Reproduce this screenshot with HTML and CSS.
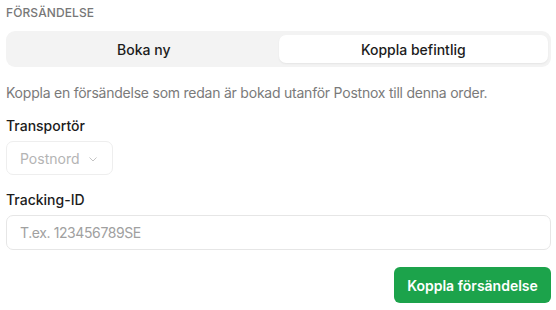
FILE: index.html
```html
<!DOCTYPE html>
<html lang="sv">
<head>
<meta charset="utf-8"/>
<title>Försändelse</title>
<link rel="stylesheet" href="styles.css">
</head>
<body>
<div class="panel">
  <h3 class="section-title">Försändelse</h3>

  <div class="tabs">
    <button type="button" class="tab">Boka ny</button>
    <button type="button" class="tab active">Koppla befintlig</button>
  </div>

  <p class="hint">Koppla en försändelse som redan är bokad utanför Postnox till denna order.</p>

  <label class="field-label">Transportör</label>
  <div class="select disabled">
    <span>Postnord</span>
    <svg width="10" height="10" viewBox="0 0 10 10"><path d="M1.5 3.5 L5 7 L8.5 3.5" fill="none" stroke="#c4c4c4" stroke-width="1"/></svg>
  </div>

  <label class="field-label second">Tracking-ID</label>
  <input type="text" class="text-input" placeholder="T.ex. 123456789SE">

  <div class="actions">
    <button type="button" class="primary">Koppla försändelse</button>
  </div>
</div>
</body>
</html>
```

FILE: styles.css
```css
:root{--green:#1ca34b;--muted:#777;--text:#1c1c1c;--border:#e6e6e6;}
*{margin:0;padding:0;box-sizing:border-box;font-family:Inter,"Noto Sans",sans-serif;}
body{background:#fff;color:var(--text);}
.panel{padding:6px 5px 0 6px;display:flex;flex-direction:column;}
.section-title{font-size:12px;line-height:14px;font-weight:500;color:var(--muted);text-transform:uppercase;letter-spacing:.1px;}
.tabs{margin-top:11px;height:36px;background:#f3f3f3;border-radius:9px;padding:4px 3px 4px 3px;display:grid;grid-template-columns:1fr 1fr;gap:0;}
.tab{border:none;background:transparent;border-radius:7px;font-size:14px;font-weight:500;color:var(--text);cursor:pointer;}
.tab.active{background:#fff;box-shadow:0 1px 2px rgba(0,0,0,.06);}
.hint{margin-top:16px;font-size:14px;line-height:20px;color:#7a7a7a;letter-spacing:-.23px;}
.field-label{display:block;margin-top:13px;font-size:14px;line-height:20px;font-weight:500;color:var(--text);}
.field-label.second{margin-top:15px;}
.select{margin-top:5px;width:107px;height:34px;border:1px solid #eee;border-radius:7px;display:flex;align-items:center;gap:8px;padding:0 0 0 13px;font-size:14px;color:#b4b4b4;}
.select svg{margin-top:1px;}
.text-input{margin-top:5px;width:100%;height:35px;border:1px solid var(--border);border-radius:7px;padding:0 13px;font-size:14px;letter-spacing:-.4px;color:var(--text);outline:none;}
.text-input::placeholder{color:#a0a0a0;}
.actions{display:flex;justify-content:flex-end;margin-top:17px;}
.primary{width:157px;height:36px;border:none;border-radius:6px;background:var(--green);color:#fff;font-size:14px;font-weight:600;cursor:pointer;}
```
